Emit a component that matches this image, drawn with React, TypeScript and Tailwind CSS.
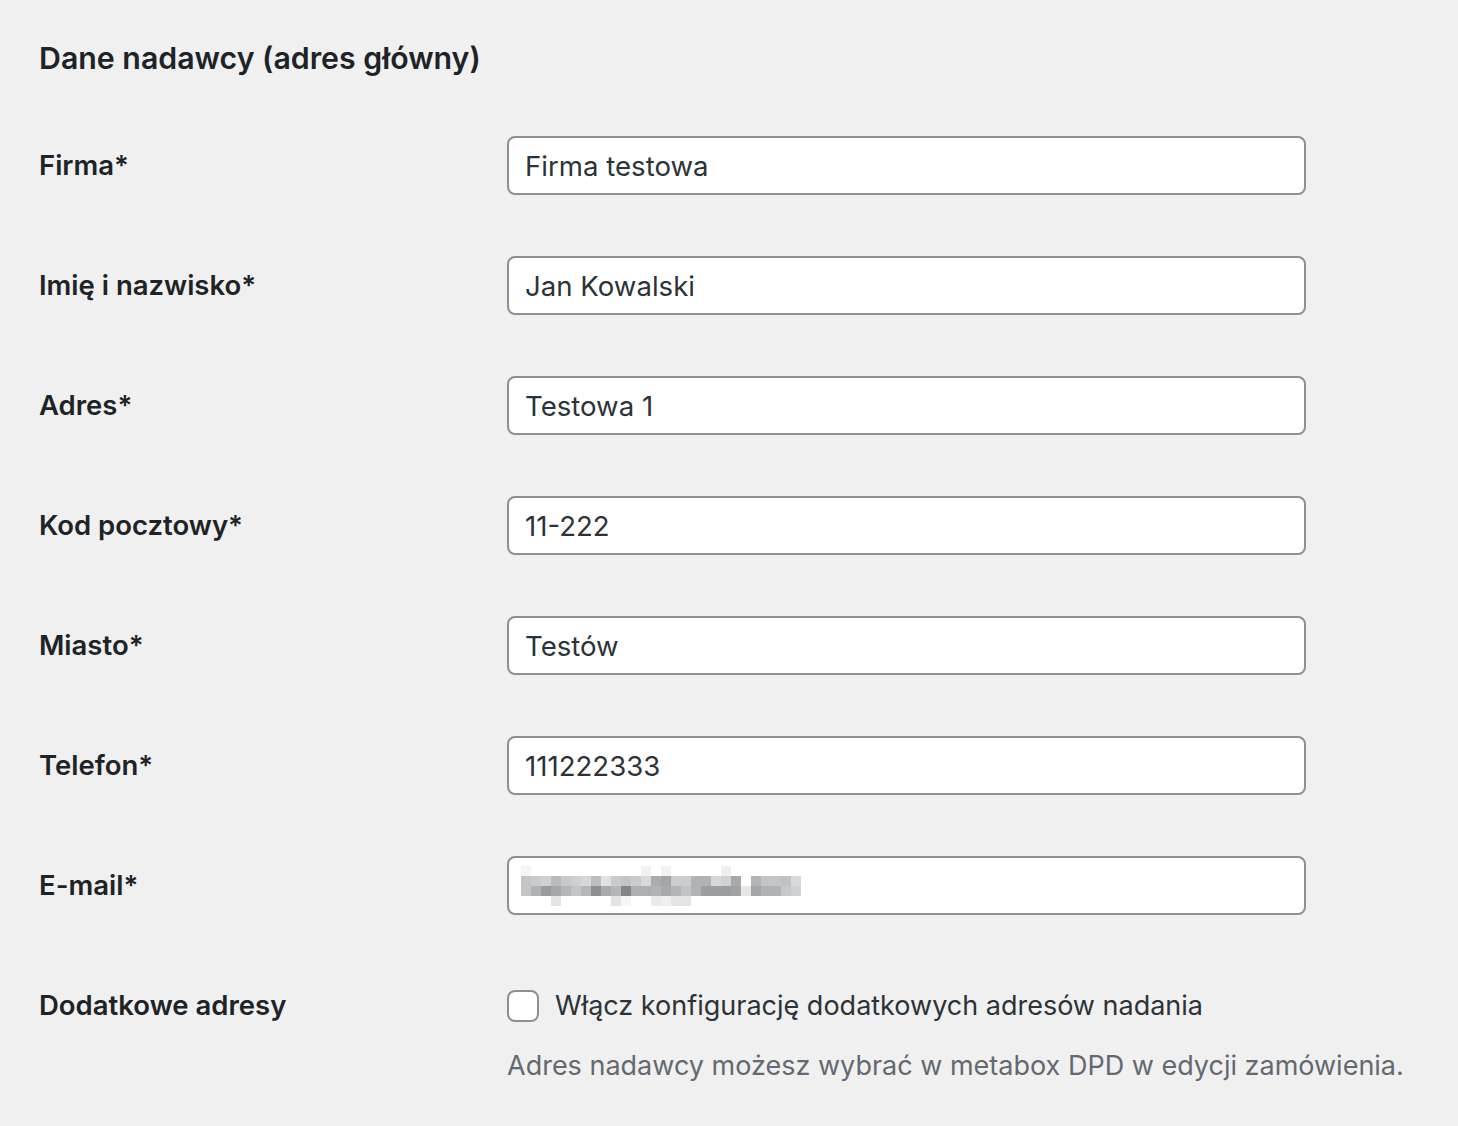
import { useState } from "react";

const fields = [
  { id: "firma", label: "Firma*", value: "Firma testowa" },
  { id: "name", label: "Imię i nazwisko*", value: "Jan Kowalski" },
  { id: "adres", label: "Adres*", value: "Testowa 1" },
  { id: "kod", label: "Kod pocztowy*", value: "11-222" },
  { id: "miasto", label: "Miasto*", value: "Testów" },
  { id: "tel", label: "Telefon*", value: "111222333" },
];

// pixelated (censored) e-mail address
const blurRows = [
  [
    "bg-[#f4f4f5]", "bg-white", "bg-white", "bg-white", "bg-white", "bg-white", "bg-white", "bg-white", "bg-white", "bg-white",
    "bg-white", "bg-white", "bg-[#f2f2f3]", "bg-white", "bg-[#f2f2f3]", "bg-white", "bg-white", "bg-white", "bg-white", "bg-white",
    "bg-[#eeeff0]", "bg-white", "bg-white", "bg-white", "bg-white", "bg-white", "bg-white", "bg-white",
  ],
  [
    "bg-[#c2c4c6]", "bg-[#c9cacc]", "bg-[#cfd0d2]", "bg-[#b9bbbd]", "bg-[#c8c9cb]", "bg-[#cdcfd1]", "bg-[#d6d7d9]", "bg-[#bcbec0]", "bg-[#e0e1e3]", "bg-[#c9cacc]",
    "bg-[#c2c4c6]", "bg-[#cbcccd]", "bg-[#d8d9db]", "bg-[#a9abad]", "bg-[#a3a5a7]", "bg-[#cbcdcf]", "bg-[#cbcdcf]", "bg-[#b0b2b4]", "bg-[#b0b2b4]", "bg-[#d6d7d9]",
    "bg-[#d0d1d3]", "bg-[#a6a8aa]", "bg-white", "bg-[#b2b4b6]", "bg-[#c3c5c7]", "bg-[#c3c5c7]", "bg-[#bfc1c3]", "bg-[#d8d9db]",
  ],
  [
    "bg-[#c4c6c8]", "bg-[#b0b2b4]", "bg-[#999b9e]", "bg-[#a5a7aa]", "bg-[#b4b6b8]", "bg-[#c2c4c6]", "bg-[#b5b7b9]", "bg-[#8d8f92]", "bg-[#a8aaad]", "bg-[#b4b6b8]",
    "bg-[#838588]", "bg-[#adafb1]", "bg-[#adafb1]", "bg-[#b1b3b5]", "bg-[#a7a9ab]", "bg-[#b2b4b6]", "bg-[#c0c2c4]", "bg-[#b1b3b5]", "bg-[#9c9ea1]", "bg-[#9c9ea1]",
    "bg-[#9c9ea1]", "bg-[#a0a2a4]", "bg-[#e6e7e8]", "bg-[#a4a6a8]", "bg-[#b0b2b4]", "bg-[#b0b2b4]", "bg-[#c6c8ca]", "bg-[#d0d1d3]",
  ],
  [
    "bg-white", "bg-white", "bg-white", "bg-[#e4e5e7]", "bg-white", "bg-white", "bg-white", "bg-white", "bg-white", "bg-[#e2e3e5]",
    "bg-[#f5f5f6]", "bg-white", "bg-white", "bg-[#e9eaeb]", "bg-[#eeeff0]", "bg-[#e4e5e7]", "bg-[#e4e5e7]", "bg-white", "bg-white", "bg-white",
    "bg-white", "bg-white", "bg-white", "bg-white", "bg-white", "bg-white", "bg-white", "bg-white",
  ],
];

function BlurredEmail() {
  return (
    <div className="flex flex-col">
      {blurRows.map((row, i) => (
        <div key={i} className="flex">
          {row.map((c, j) => (
            <div key={j} className={`${c} w-[10px] h-[10px]`} />
          ))}
        </div>
      ))}
    </div>
  );
}

function Row({ label, children }: { label: string; children: React.ReactNode }) {
  return (
    <div className="flex h-[120px]">
      <div className="w-[468px] pt-[40px] text-[27.5px] leading-[36px] font-semibold text-[#1d2327]">
        {label}
      </div>
      <div className="pt-[29px]">{children}</div>
    </div>
  );
}

export default function App() {
  const [extra, setExtra] = useState(false);

  return (
    <div className="min-h-screen w-full bg-[#f0f0f1] pl-[39px] font-['Inter','Liberation_Sans',sans-serif] text-[#1d2327]">
      <h2 className="pt-[38px] pb-[29px] text-[30.3px] leading-[40px] font-semibold">
        Dane nadawcy (adres główny)
      </h2>

      <div className="flex flex-col">
        {fields.map((f) => (
          <Row key={f.id} label={f.label}>
            <input
              defaultValue={f.value}
              className="w-[799px] h-[59px] rounded-[8px] border-2 border-[#8c8f94] bg-white px-[16px] text-[27.6px] text-[#2c3338] outline-none"
            />
          </Row>
        ))}

        <Row label="E-mail*">
          <div className="flex items-center w-[799px] h-[59px] rounded-[8px] border-2 border-[#8c8f94] bg-white pl-[12px]">
            <BlurredEmail />
          </div>
        </Row>

        <div className="flex">
          <div className="w-[468px] pt-[40px] text-[27.5px] leading-[36px] font-semibold text-[#1d2327]">
            Dodatkowe adresy
          </div>
          <div className="pt-[41px]">
            <label className="flex items-center gap-[16px] cursor-pointer">
              <input
                type="checkbox"
                checked={extra}
                onChange={(e) => setExtra(e.target.checked)}
                className="appearance-none w-[32px] h-[32px] rounded-[8px] border-2 border-[#8c8f94] bg-white checked:bg-[#2271b1]"
              />
              <span className="text-[27px] leading-[36px] text-[#2c3338]">
                Włącz konfigurację dodatkowych adresów nadania
              </span>
            </label>
            <p className="mt-[24px] text-[27px] leading-[36px] text-[#646970]">
              Adres nadawcy możesz wybrać w metabox DPD w edycji zamówienia.
            </p>
          </div>
        </div>
      </div>
    </div>
  );
}
